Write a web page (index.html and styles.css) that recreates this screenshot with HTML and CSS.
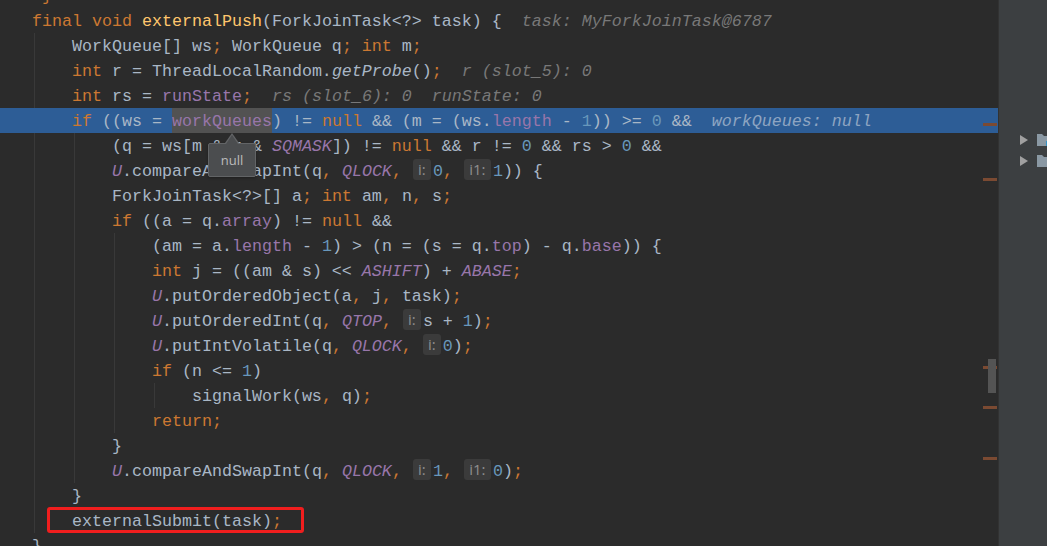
FILE: index.html
```html
<!DOCTYPE html>
<html lang="en">
<head>
    <meta charset="UTF-8">
    <title>ForkJoinPool.externalPush</title>
    <link rel="stylesheet" href="styles.css">
</head>
<body>
    <div class="ide">
        <div class="editor">
            <div class="code">
                <div class="line"><span class="k"> }</span></div>
                <div class="line"><span class="k">final void </span><span class="m">externalPush</span>(ForkJoinTask&lt;?&gt; task) {  <span class="h">task: MyForkJoinTask@6787</span></div>
                <div class="line">    WorkQueue[] ws<span class="k">;</span> WorkQueue q<span class="k">; int </span>m<span class="k">;</span></div>
                <div class="line">    <span class="k">int </span>r = ThreadLocalRandom.<span class="s">getProbe</span>()<span class="k">;</span>  <span class="h">r (slot_5): 0</span></div>
                <div class="line">    <span class="k">int </span>rs = <span class="f">runState</span><span class="k">;</span>  <span class="h">rs (slot_6): 0  runState: 0</span></div>
                <div class="line exec">    <span class="k">if </span>((ws = <span class="f hover">workQueues</span>) != <span class="k">null</span> &amp;&amp; (m = (ws.<span class="f">length</span> - <span class="n">1</span>)) &gt;= <span class="n">0</span> &amp;&amp;  <span class="h">workQueues: null</span></div>
                <div class="line">        (q = ws[m &amp; r &amp; <span class="c">SQMASK</span>]) != <span class="k">null</span> &amp;&amp; r != <span class="n">0</span> &amp;&amp; rs &gt; <span class="n">0</span> &amp;&amp;</div>
                <div class="line">        <span class="c">U</span>.compareAndSwapInt(q<span class="k">, </span><span class="c">QLOCK</span><span class="k">, </span><span class="hint">i:</span><span class="n">0</span><span class="k">, </span><span class="hint wide">i1:</span><span class="n">1</span>)) {</div>
                <div class="line">        ForkJoinTask&lt;?&gt;[] a<span class="k">; int </span>am<span class="k">, </span>n<span class="k">, </span>s<span class="k">;</span></div>
                <div class="line">        <span class="k">if </span>((a = q.<span class="f">array</span>) != <span class="k">null</span> &amp;&amp;</div>
                <div class="line">            (am = a.<span class="f">length</span> - <span class="n">1</span>) &gt; (n = (s = q.<span class="f">top</span>) - q.<span class="f">base</span>)) {</div>
                <div class="line">            <span class="k">int </span>j = ((am &amp; s) &lt;&lt; <span class="c">ASHIFT</span>) + <span class="c">ABASE</span><span class="k">;</span></div>
                <div class="line">            <span class="c">U</span>.putOrderedObject(a<span class="k">, </span>j<span class="k">, </span>task)<span class="k">;</span></div>
                <div class="line">            <span class="c">U</span>.putOrderedInt(q<span class="k">, </span><span class="c">QTOP</span><span class="k">, </span><span class="hint">i:</span>s + <span class="n">1</span>)<span class="k">;</span></div>
                <div class="line">            <span class="c">U</span>.putIntVolatile(q<span class="k">, </span><span class="c">QLOCK</span><span class="k">, </span><span class="hint">i:</span><span class="n">0</span>)<span class="k">;</span></div>
                <div class="line">            <span class="k">if </span>(n &lt;= <span class="n">1</span>)</div>
                <div class="line">                signalWork(ws<span class="k">, </span>q)<span class="k">;</span></div>
                <div class="line">            <span class="k">return;</span></div>
                <div class="line">        }</div>
                <div class="line">        <span class="c">U</span>.compareAndSwapInt(q<span class="k">, </span><span class="c">QLOCK</span><span class="k">, </span><span class="hint">i:</span><span class="n">1</span><span class="k">, </span><span class="hint wide">i1:</span><span class="n">0</span>)<span class="k">;</span></div>
                <div class="line">    }</div>
                <div class="line">    externalSubmit(task)<span class="k">;</span></div>
                <div class="line">}</div>
            </div>

            <!-- indent guides -->
            <div class="guide g1"></div>
            <div class="guide g2"></div>
            <div class="guide g3"></div>
            <div class="guide g4"></div>

            <!-- error stripe -->
            <div class="mark" style="top: 123px"></div>
            <div class="mark" style="top: 178px"></div>
            <div class="mark" style="top: 366px"></div>
            <div class="mark" style="top: 406px"></div>
            <div class="mark" style="top: 457px"></div>
            <div class="thumb"></div>

            <div class="tooltip">null</div>
            <div class="callout"></div>
        </div>

        <div class="side">
            <div class="tree-row">
                <span class="arrow"></span>
                <svg class="folder" width="14" height="14" viewBox="0 0 14 14">
                    <path d="M0 1h5l2 2h7v10H0z" fill="#8a98a3"/>
                    <rect x="9" y="8" width="5" height="5" fill="#3592c4"/>
                </svg>
            </div>
            <div class="tree-row">
                <span class="arrow"></span>
                <svg class="folder" width="14" height="14" viewBox="0 0 14 14">
                    <path d="M0 1h5l2 2h7v10H0z" fill="#8a98a3"/>
                    <rect x="10" y="7" width="3" height="7" fill="#62b543"/>
                </svg>
            </div>
        </div>
    </div>
</body>
</html>
```

FILE: styles.css
```css
* {
    margin: 0;
    padding: 0;
    box-sizing: border-box;
}

body {
    background: #2b2b2b;
    overflow: hidden;
}

.ide {
    display: flex;
    height: 546px;
    overflow: hidden;
}

.editor {
    position: relative;
    width: 998px;
    flex: none;
    background: #2b2b2b;
    overflow: hidden;
}

.code {
    margin-top: -17px;
    font-family: 'Liberation Mono', 'Courier New', monospace;
    font-size: 16.67px;
    color: #a9b7c6;
}

.line {
    height: 25px;
    line-height: 23px;
    padding-top: 2px;
    padding-left: 32px;
    white-space: pre;
}

.line.exec {
    background: #2d5d96;
    position: relative;
    z-index: 1;
}

.k { color: #cc7832; }
.m { color: #ffc66d; }
.n { color: #6897bb; }
.f { color: #9876aa; }
.c { color: #9876aa; font-style: italic; }
.s { font-style: italic; }

.h {
    color: #787878;
    font-style: italic;
}

.exec .h {
    color: #8ea5c2;
}

.hover {
    display: inline-block;
    height: 25px;
    margin-top: -2px;
    padding-top: 2px;
    vertical-align: top;
    background: #525252;
}

.hint {
    display: inline-block;
    width: 18px;
    height: 21px;
    line-height: 21px;
    margin: -1px 2px 0 1px;
    vertical-align: top;
    text-align: center;
    border-radius: 3px;
    background: #3b3b3b;
    color: #8e8e8e;
    font-family: 'Open Sans', 'Noto Sans', sans-serif;
    font-size: 15px;
    font-style: normal;
}

.hint.wide {
    width: 27px;
}

.guide {
    position: absolute;
    width: 1px;
    background: #393939;
}

.g1 { left: 34px; top: 33px; height: 500px; }
.g2 { left: 74px; top: 133px; height: 350px; }
.g3 { left: 114px; top: 233px; height: 200px; }
.g4 { left: 154px; top: 383px; height: 25px; }

.mark {
    position: absolute;
    left: 983px;
    width: 14px;
    height: 3px;
    background: #7b4a32;
    z-index: 2;
}

.thumb {
    position: absolute;
    left: 988px;
    top: 359px;
    width: 8px;
    height: 34px;
    background: #545454;
    z-index: 3;
}

.tooltip {
    position: absolute;
    left: 208px;
    top: 143px;
    width: 48px;
    height: 34px;
    line-height: 32px;
    text-align: center;
    background: #4b4d4f;
    border: 1px solid #626466;
    border-radius: 2px;
    color: #bbbbbb;
    font-family: 'Open Sans', 'Noto Sans', sans-serif;
    font-size: 13px;
    z-index: 4;
    box-shadow: 0 1px 3px rgba(0,0,0,0.3);
}

/* arrow pointing at the hovered value */
.tooltip::before,
.tooltip::after {
    content: '';
    position: absolute;
    left: 16px;
    top: -11px;
    border-left: 7px solid transparent;
    border-right: 7px solid transparent;
    border-bottom: 10px solid #626466;
}

.tooltip::after {
    left: 17px;
    top: -9px;
    border-left-width: 6px;
    border-right-width: 6px;
    border-bottom: 9px solid #4b4d4f;
}

.callout {
    position: absolute;
    left: 47px;
    top: 507px;
    width: 257px;
    height: 26px;
    border: 3px solid #f01e1e;
    border-radius: 3px;
}

.side {
    flex: 1;
    background: #3c3f41;
    border-left: 1px solid #323232;
    padding: 129px 0 0 21px;
}

.tree-row {
    display: flex;
    align-items: center;
    gap: 9px;
    height: 21px;
}

.arrow {
    width: 0;
    height: 0;
    border-top: 5px solid transparent;
    border-bottom: 5px solid transparent;
    border-left: 8px solid #a0a0a0;
}

.folder {
    flex: none;
}
```
